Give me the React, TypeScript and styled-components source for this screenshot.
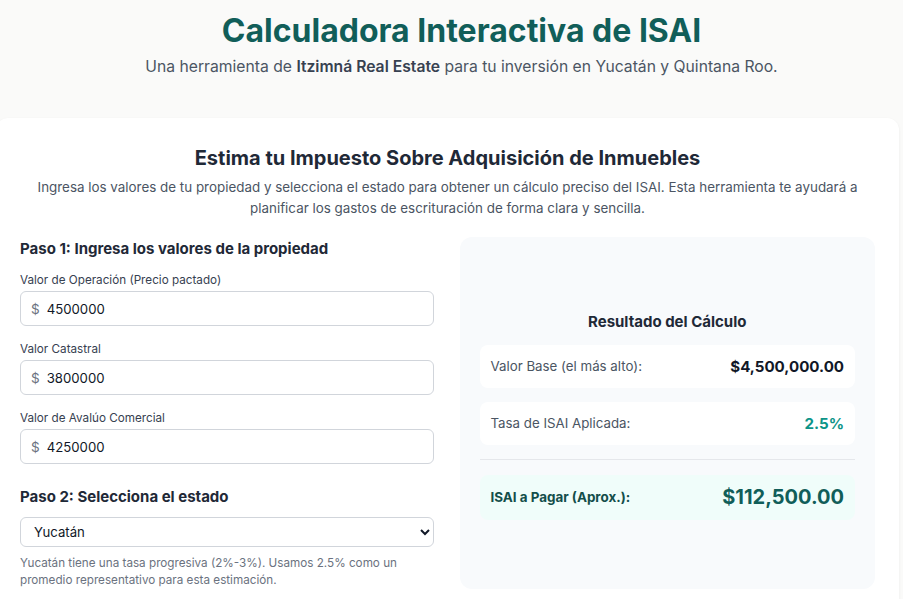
import React from "react";
import styled, { createGlobalStyle } from "styled-components";

const Global = createGlobalStyle`
  html, body { margin: 0; padding: 0; }
  body {
    background: #fafaf9;
    font-family: Inter, "Noto Sans", sans-serif;
    color: #1f2937;
    overflow: hidden;
  }
  * { box-sizing: border-box; }
`;

const Page = styled.div`
  width: 903px;
  min-height: 599px;
`;

const Header = styled.header`
  padding: 13px 0 39px 20px;
  text-align: center;
`;

const Title = styled.h1`
  margin: 0;
  font-size: 32px;
  line-height: 36px;
  font-weight: 700;
  color: #115e59;
`;

const Subtitle = styled.p`
  margin: 6px 0 0;
  font-size: 15.7px;
  line-height: 24px;
  color: #4b5563;
  strong { font-weight: 600; color: #374151; }
`;

const Card = styled.main`
  margin-left: -4px;
  width: 903px;
  background: #ffffff;
  border-radius: 12px;
  box-shadow: 0 1px 3px rgba(0, 0, 0, 0.06);
  padding: 26px 24px 24px;
`;

const CardTitle = styled.h2`
  margin: 0;
  text-align: center;
  font-size: 20px;
  line-height: 28px;
  font-weight: 700;
  color: #1f2937;
`;

const Intro = styled.p`
  margin: 5px 0 18px;
  text-align: center;
  font-size: 13.4px;
  line-height: 21px;
  color: #4b5563;
`;

const Grid = styled.div`
  display: grid;
  grid-template-columns: 1fr 1fr;
  gap: 24px;
`;

const Column = styled.section`
  display: flex;
  flex-direction: column;
`;

const StepTitle = styled.h3<{ $top?: number }>`
  margin: ${(p) => p.$top ?? 0}px 0 8px;
  font-size: 15px;
  line-height: 24px;
  font-weight: 700;
  color: #1f2937;
`;

const Field = styled.div`
  display: flex;
  flex-direction: column;
  & + & { margin-top: 12px; }
`;

const Label = styled.label`
  font-size: 11.7px;
  line-height: 18px;
  color: #374151;
  margin: 2px 0;
`;

const InputWrap = styled.div`
  display: flex;
  align-items: center;
  height: 35px;
  width: 414px;
  border: 1px solid #d1d5db;
  border-radius: 6px;
  padding: 0 10px;
  background: #fff;
`;

const Currency = styled.span`
  font-size: 13.5px;
  color: #6b7280;
  margin-right: 7px;
`;

const NumberInput = styled.input`
  border: none;
  outline: none;
  flex: 1;
  font-family: inherit;
  font-size: 13.2px;
  color: #111827;
  background: transparent;
  padding: 0;
`;

const Select = styled.select`
  width: 414px;
  height: 30px;
  border: 1px solid #d1d5db;
  border-radius: 6px;
  padding: 0 9px;
  font-family: inherit;
  font-size: 13.2px;
  color: #111827;
  background: #fff;
`;

const Help = styled.p`
  margin: 8px 0 0;
  font-size: 11.7px;
  line-height: 17px;
  color: #6b7280;
`;

const ResultPanel = styled.section`
  background: #f8fafc;
  border-radius: 12px;
  padding: 22px 20px 18px;
  display: flex;
  flex-direction: column;
  justify-content: center;
`;

const ResultTitle = styled.h3`
  margin: 0 0 12px;
  text-align: center;
  font-size: 15px;
  line-height: 22px;
  font-weight: 700;
  color: #1f2937;
`;

const Row = styled.div<{ $highlight?: boolean }>`
  display: flex;
  align-items: center;
  justify-content: space-between;
  border-radius: 8px;
  padding: 0 11px;
  height: ${(p) => (p.$highlight ? 45 : 43)}px;
  background: ${(p) => (p.$highlight ? "#f0fdfa" : "#ffffff")};
  & + & { margin-top: 14px; }
`;

const RowLabel = styled.span<{ $strong?: boolean }>`
  font-size: ${(p) => (p.$strong ? 13.4 : 13.3)}px;
  font-weight: ${(p) => (p.$strong ? 700 : 400)};
  color: ${(p) => (p.$strong ? "#134e4a" : "#4b5563")};
`;

const RowValue = styled.span<{ $tone?: "teal" | "big" }>`
  font-weight: 700;
  font-size: ${(p) => (p.$tone === "big" ? 20 : 15.1)}px;
  color: ${(p) =>
    p.$tone === "teal" ? "#0d9488" : p.$tone === "big" ? "#115e59" : "#111827"};
`;

const Divider = styled.hr`
  border: none;
  border-top: 1px solid #e5e7eb;
  margin: 14px 0 15px;
`;

const fields = [
  { label: "Valor de Operación (Precio pactado)", value: "4500000" },
  { label: "Valor Catastral", value: "3800000" },
  { label: "Valor de Avalúo Comercial", value: "4250000" },
];

export default function App() {
  return (
    <Page>
      <Global />
      <Header>
        <Title>Calculadora Interactiva de ISAI</Title>
        <Subtitle>
          Una herramienta de <strong>Itzimná Real Estate</strong> para tu inversión en Yucatán y Quintana Roo.
        </Subtitle>
      </Header>
      <Card>
        <CardTitle>Estima tu Impuesto Sobre Adquisición de Inmuebles</CardTitle>
        <Intro>
          Ingresa los valores de tu propiedad y selecciona el estado para obtener un cálculo preciso del ISAI. Esta
          herramienta te ayudará a planificar los gastos de escrituración de forma clara y sencilla.
        </Intro>
        <Grid>
          <Column>
            <StepTitle>Paso 1: Ingresa los valores de la propiedad</StepTitle>
            {fields.map((f) => (
              <Field key={f.label}>
                <Label>{f.label}</Label>
                <InputWrap>
                  <Currency>$</Currency>
                  <NumberInput defaultValue={f.value} />
                </InputWrap>
              </Field>
            ))}
            <StepTitle $top={21}>Paso 2: Selecciona el estado</StepTitle>
            <Select defaultValue="yuc">
              <option value="yuc">Yucatán</option>
              <option value="qroo">Quintana Roo</option>
            </Select>
            <Help>
              Yucatán tiene una tasa progresiva (2%-3%). Usamos 2.5% como un promedio representativo para esta
              estimación.
            </Help>
          </Column>
          <ResultPanel>
            <ResultTitle>Resultado del Cálculo</ResultTitle>
            <Row>
              <RowLabel>Valor Base (el más alto):</RowLabel>
              <RowValue>$4,500,000.00</RowValue>
            </Row>
            <Row>
              <RowLabel>Tasa de ISAI Aplicada:</RowLabel>
              <RowValue $tone="teal">2.5%</RowValue>
            </Row>
            <Divider />
            <Row $highlight>
              <RowLabel $strong>ISAI a Pagar (Aprox.):</RowLabel>
              <RowValue $tone="big">$112,500.00</RowValue>
            </Row>
          </ResultPanel>
        </Grid>
      </Card>
    </Page>
  );
}
